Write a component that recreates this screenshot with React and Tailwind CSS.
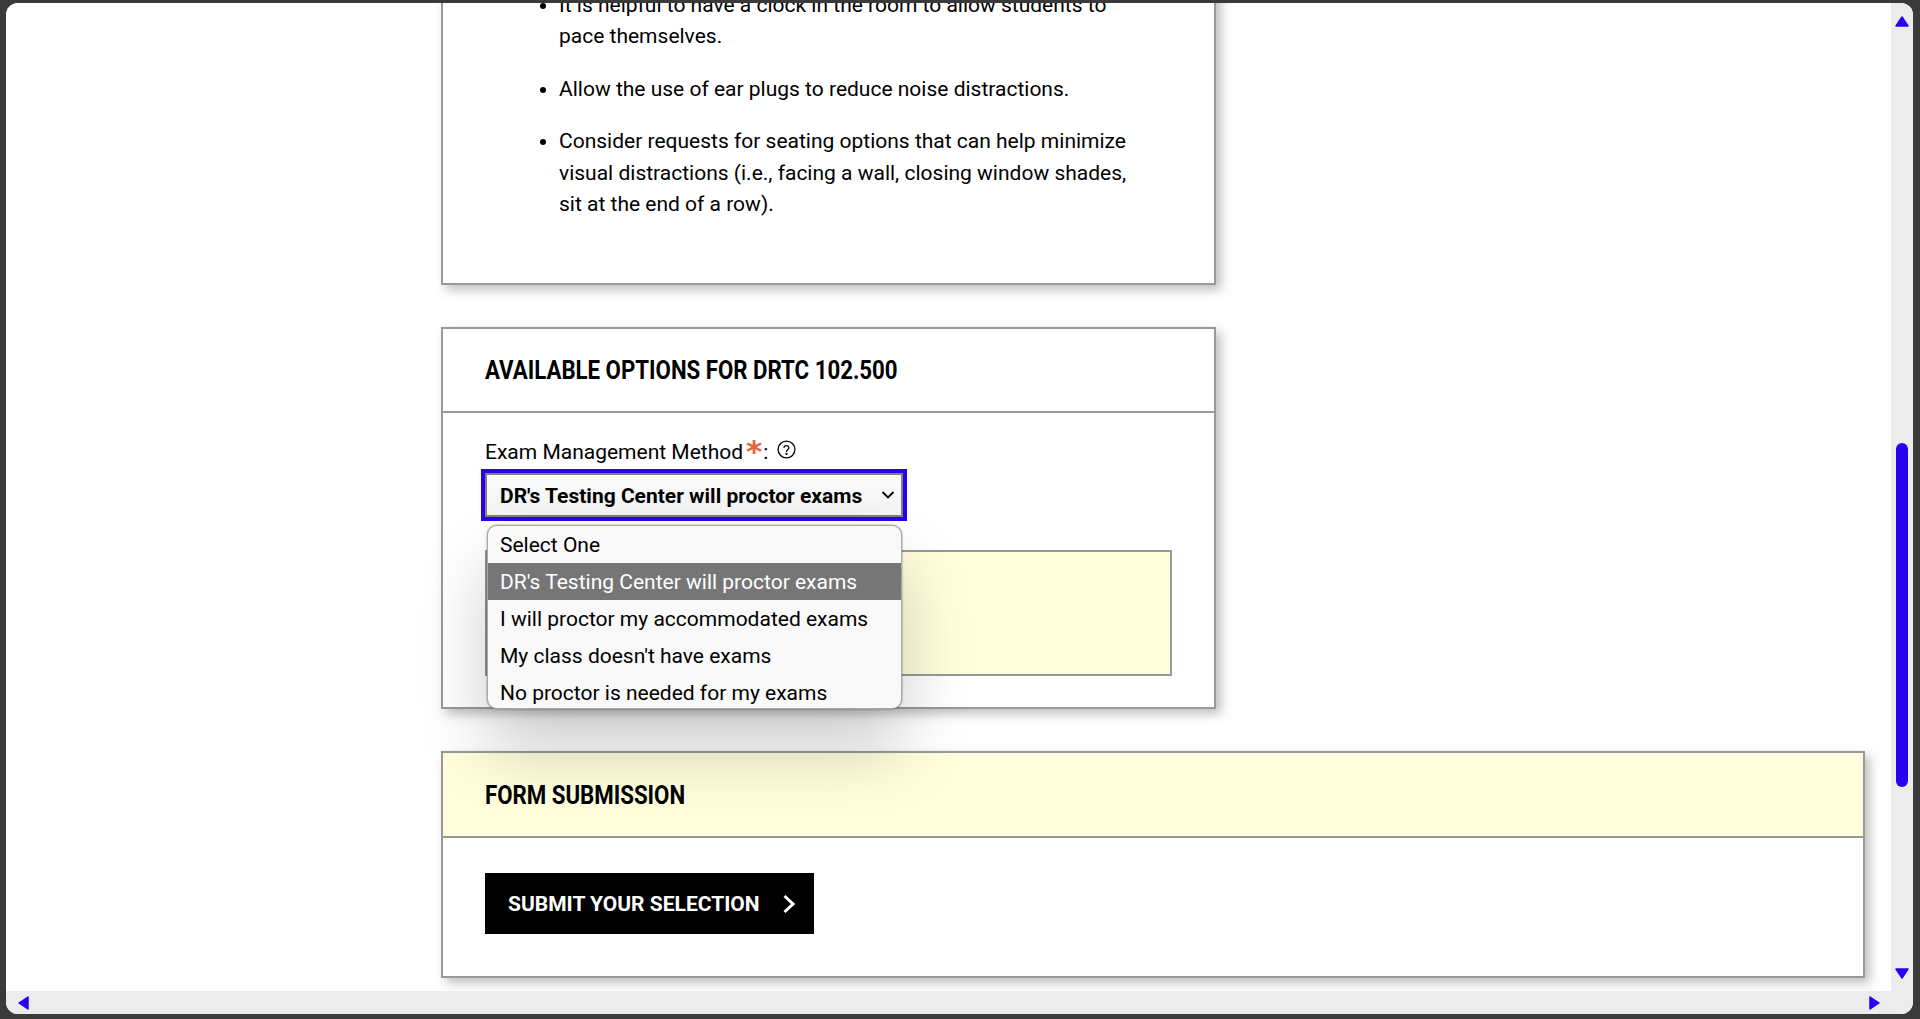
import React from "react";

const Up = () => (<svg width="14" height="11" viewBox="0 0 14 11" className="block"><path d="M7 1 L13 10 H1 Z" fill="#2a00f0" stroke="#2a00f0" strokeWidth="1.5" strokeLinejoin="round" /></svg>);
const Down = () => (<svg width="14" height="11" viewBox="0 0 14 11" className="block"><path d="M1 1 H13 L7 10 Z" fill="#2a00f0" stroke="#2a00f0" strokeWidth="1.5" strokeLinejoin="round" /></svg>);
const Left = () => (<svg width="11" height="14" viewBox="0 0 11 14" className="block"><path d="M10 1 V13 L1 7 Z" fill="#2a00f0" stroke="#2a00f0" strokeWidth="1.5" strokeLinejoin="round" /></svg>);
const Right = () => (<svg width="11" height="14" viewBox="0 0 11 14" className="block"><path d="M1 1 V13 L10 7 Z" fill="#2a00f0" stroke="#2a00f0" strokeWidth="1.5" strokeLinejoin="round" /></svg>);

const cardCls = "border-2 border-[#999999] bg-white shadow-[5px_5px_10px_rgba(0,0,0,0.25)]";
const headCls = "font-bold text-[26px] leading-[32px] uppercase whitespace-nowrap inline-block origin-left scale-x-[0.855] text-black";

const options = ["Select One", "DR's Testing Center will proctor exams", "I will proctor my accommodated exams", "My class doesn't have exams", "No proctor is needed for my exams"];

export default function App() {
  return (
    <div className="h-[1019px] w-[1920px] overflow-hidden bg-[#3a3a3a] pt-[3px] pr-[7px] pb-[5px] pl-[6px] font-['Roboto',sans-serif] text-black">
      <div className="flex h-full w-full flex-col overflow-hidden rounded-[12px] bg-white">
        <div className="flex min-h-0 flex-1">
          <main className="flex min-w-0 flex-1 flex-col justify-end overflow-hidden bg-white pl-[435px] pr-[26px] pb-[13px]">
            <section className={`${cardCls} w-[775px] shrink-0 pb-[62px] pr-[80px] text-[21px] leading-[31.5px]`}>
              <ul className="list-disc pl-[116px] flex flex-col gap-[21px]">
                <li>It is helpful to have a clock in the room to allow students to pace themselves.</li>
                <li>Allow the use of ear plugs to reduce noise distractions.</li>
                <li>Consider requests for seating options that can help minimize visual distractions (i.e., facing a wall, closing window shades, sit at the end of a row).</li>
              </ul>
            </section>

            <section className={`${cardCls} relative mt-[42.5px] h-[382px] w-[775px] shrink-0`}>
              <div className="flex h-[84px] items-center border-b-2 border-[#999999] pl-[42px]">
                <h2 className={headCls}>Available Options for DRTC 102.500</h2>
              </div>
              <div className="px-[42px] pt-[24px]">
                <div className="flex h-[32px] items-center text-[21px]">
                  <span>Exam Management Method</span>
                  <span className="ml-[3px] mt-[-3px] font-['DejaVu_Sans'] text-[31px] font-bold leading-none text-[#e8623a]">*</span>
                  <span className="ml-[1px]">:</span>
                  <svg width="19" height="19" viewBox="0 0 19 19" fill="none" stroke="black" strokeWidth="1.3" className="ml-[9px] mt-[-8px]">
                    <circle cx="9.5" cy="9.5" r="8.4" />
                    <path d="M7 7.4a2.5 2.5 0 0 1 4.9.4c0 1.7-2.4 2-2.4 3.6" strokeLinecap="round" />
                    <circle cx="9.5" cy="14" r="0.5" fill="black" />
                  </svg>
                </div>
                <div className="relative mt-[4px] w-[418px]">
                  <div className="flex h-[44px] items-center justify-between border-2 border-[#808080] bg-gradient-to-b from-[#fbfbfb] to-[#f3f3f3] pl-[13px] pr-[6px] pt-[3px] text-[21px] font-bold outline-[4px] outline-solid outline-[#2a00f0]">
                    <span className="whitespace-nowrap">DR's Testing Center will proctor exams</span>
                    <svg width="14" height="14" viewBox="0 0 14 14" fill="none" stroke="black" strokeWidth="1.8" className="mt-[-3px]"><path d="M1.5 4 L7 9.5 L12.5 4" /></svg>
                  </div>
                  <div className="mt-[33px] h-[126px] w-[687px] border-2 border-[#999999] bg-[#ffffdd]" />
                  <ul className="absolute left-[2px] top-[52px] z-10 h-[184px] w-[415px] overflow-hidden rounded-[10px] border border-[#a8a8a8] bg-[#f9f9f9] text-[21px] shadow-[0_0_2px_rgba(0,0,0,0.5),0_40px_70px_rgba(0,0,0,0.2)]">
                    {options.map((o, i) => (
                      <li key={o} className={`flex h-[37px] items-center whitespace-nowrap pl-[12px] pt-[2px] ${i === 1 ? "bg-[#767676] text-white" : ""}`}>{o}</li>
                    ))}
                  </ul>
                </div>
              </div>
            </section>

            <section className={`${cardCls} mt-[42px] w-full shrink-0`}>
              <div className="flex h-[85px] items-center border-b-2 border-[#999999] bg-[#ffffdd] pl-[42px]">
                <h2 className={headCls}>Form Submission</h2>
              </div>
              <div className="px-[42px] pt-[35px] pb-[42px]">
                <button className="flex h-[61px] w-[329px] items-center bg-black pl-[23px] text-[21px] font-bold uppercase text-white">
                  <span className="whitespace-nowrap pt-[2px]">Submit Your Selection</span>
                  <svg width="14" height="20" viewBox="0 0 14 20" fill="none" stroke="white" strokeWidth="3" className="ml-[22px]"><path d="M2.5 2 L11 10 L2.5 18" /></svg>
                </button>
              </div>
            </section>
          </main>

          <aside className="flex w-[22px] shrink-0 flex-col items-center bg-[#ececec]">
            <div className="mt-[13px]"><Up /></div>
            <div className="mt-[416px] h-[344px] w-[12px] rounded-full bg-[#2a00f0]" />
            <div className="mt-[181px]"><Down /></div>
          </aside>
        </div>
        <div className="flex h-[23px] shrink-0 items-center justify-between bg-[#ececec] pl-[12px] pr-[33px]">
          <Left />
          <Right />
        </div>
      </div>
    </div>
  );
}
